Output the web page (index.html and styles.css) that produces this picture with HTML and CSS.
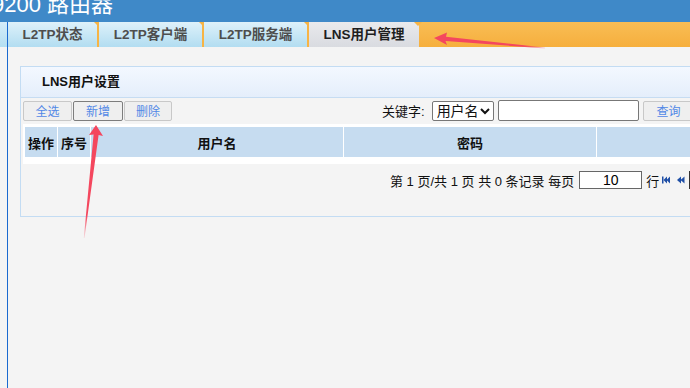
FILE: index.html
```html
<html lang="zh-CN">
<head>
    <meta charset="UTF-8">
    <title>LNS用户管理</title>
    <link rel="stylesheet" href="styles.css">
</head>
<body>
<div class="top"><span class="brand">9200 路由器</span></div>
<div class="frame">
    <div class="side"></div>
    <div class="main">
        <ul class="tabs">
            <li class="t1">L2TP状态</li>
            <li class="t2">L2TP客户端</li>
            <li class="t3">L2TP服务端</li>
            <li class="t4 on">LNS用户管理</li>
        </ul>
        <div class="content">
            <div class="panel">
                <div class="panel-head">LNS用户设置</div>
                <div class="toolbar">
                    <button class="btn b1" type="button">全选</button>
                    <button class="btn b2 focus" type="button">新增</button>
                    <button class="btn b3" type="button">删除</button>
                    <div class="search">
                        <span class="label">关键字:</span>
                        <select class="field"><option>用户名</option></select>
                        <input class="keyword" type="text">
                        <button class="btn query" type="button">查询</button>
                    </div>
                </div>
                <table class="grid">
                    <tr>
                        <th class="c1">操作</th>
                        <th class="c2">序号</th>
                        <th class="c3">用户名</th>
                        <th class="c4">密码</th>
                        <th class="c5"></th>
                    </tr>
                </table>
                <div class="pager">
                    <span>第 1 页/共 1 页 共 0 条记录 每页</span>
                    <input class="rows" type="text" value="10">
                    <span class="unit">行</span>
                    <svg class="ico" width="8" height="8" viewBox="0 0 8 8"><rect x="0" y="0.5" width="1.5" height="7" fill="#1f4fa6"/><polygon points="1.5,4 5,0.5 5,7.5" fill="#1f4fa6"/><polygon points="4.5,4 8,0.5 8,7.5" fill="#1f4fa6"/></svg>
                    <svg class="ico prev" width="8" height="8" viewBox="0 0 8 8"><polygon points="0,4 4,0.5 4,7.5" fill="#1f4fa6"/><polygon points="3.5,4 7.5,0.5 7.5,7.5" fill="#1f4fa6"/></svg>
                    <span class="more"></span>
                </div>
            </div>
        </div>
    </div>
</div>

<!-- annotation arrows drawn over the screenshot -->
<svg class="marks" width="690" height="388" viewBox="0 0 690 388">
    <defs>
        <linearGradient id="fade1" x1="435" y1="38" x2="545" y2="48" gradientUnits="userSpaceOnUse">
            <stop offset="0" stop-color="#f4475e"/>
            <stop offset="0.8" stop-color="#f4475e"/>
            <stop offset="1" stop-color="#f4475e" stop-opacity="0.2"/>
        </linearGradient>
        <linearGradient id="fade2" x1="96" y1="125" x2="84" y2="238" gradientUnits="userSpaceOnUse">
            <stop offset="0" stop-color="#f4475e"/>
            <stop offset="0.8" stop-color="#f4475e"/>
            <stop offset="1" stop-color="#f4475e" stop-opacity="0.15"/>
        </linearGradient>
    </defs>
    <polygon fill="url(#fade1)" points="434,38 447,32.5 446,36.8 545,47.5 545,48.5 445.5,41 447,45"/>
    <polygon fill="url(#fade2)" points="96,125 103,136 98.6,135 84.5,238 83.8,238 93.6,134.5 89,135"/>
</svg>
</body>
</html>
```

FILE: styles.css
```css
body {
    margin: 0;
    padding: 0;
    width: 690px;
    height: 388px;
    overflow: hidden;
    background: #f4f4f4;
    font: 13px "Liberation Sans", "Noto Sans CJK SC", sans-serif;
    color: #111;
}

.top {
    height: 22px;
    overflow: hidden;
    background: #3f89c8;
}

.brand {
    display: block;
    margin: -6px 0 0 -8px;
    font-size: 22px;
    line-height: 22px;
    color: #fff;
    white-space: nowrap;
}

.frame {
    display: flex;
    height: 366px;
}

.side {
    width: 7px;
    border-right: 1px solid #1a6ad0;
    background: linear-gradient(#d6edf9, #b4dff2 25px, #f4f4f4 25px);
}

.main {
    flex: 1;
    min-width: 0;
}

/* tab strip */
.tabs {
    display: flex;
    height: 25px;
    margin: 0;
    padding: 0;
    list-style: none;
    background: linear-gradient(#f9bd55, #f6af3d);
}

.tabs li {
    position: relative;
    height: 25px;
    line-height: 25px;
    text-align: center;
    font-weight: bold;
    font-size: 13.5px;
    color: #4e4e4e;
    background: linear-gradient(#def1fa, #b2ddf1);
    border-right: 2px solid #f7b445;
}

.tabs li::after {
    content: "";
    position: absolute;
    top: 0;
    right: -5px;
    border-left: 4px solid transparent;
    border-right: 4px solid transparent;
    border-top: 4px solid #f7b445;
}

.tabs .t1 { width: 89px; }
.tabs .t2 { width: 103px; }
.tabs .t3 { width: 103px; }
.tabs .t4 { width: 110px; border-right: 0; }
.tabs .t4::after { right: -3px; }

.tabs li.on {
    color: #1e1e1e;
    background: linear-gradient(#e9eaed, #d9dbe0);
}

/* content */
.content {
    padding: 19px 0 0 12px;
}

.panel {
    box-sizing: border-box;
    width: 700px;
    height: 151px;
    border: 1px solid #c3dcf3;
    background: #f4f4f4;
}

.panel-head {
    height: 30px;
    line-height: 30px;
    padding-left: 21px;
    font-weight: bold;
    border-bottom: 1px solid #c6dcf2;
    background: linear-gradient(#f3f8ff, #e4eefb);
}

.toolbar {
    display: flex;
    align-items: center;
    padding: 2px 2px 0 2px;
}

.btn {
    box-sizing: border-box;
    height: 20px;
    margin: 0 1px 0 0;
    padding: 0;
    border: 1px solid #c8c8c8;
    border-radius: 2px;
    background: #efefef;
    color: #5288e6;
    font: 12px "Liberation Sans", "Noto Sans CJK SC", sans-serif;
}

.b1 { width: 49px; }
.b2 { width: 50px; }
.b3 { width: 48px; }

.btn.focus {
    border-color: #7d7d7d;
}

.search {
    display: flex;
    align-items: center;
    margin-left: 209px;
}

.label {
    margin-right: 7px;
}

.field {
    box-sizing: border-box;
    width: 62px;
    height: 20px;
    margin: 0 4px 0 0;
    padding: 0;
    border: 1px solid #777;
    border-radius: 2px;
    background: #fff;
    color: #111;
    font: 14px "Liberation Sans", "Noto Sans CJK SC", sans-serif;
}

.keyword {
    box-sizing: border-box;
    width: 141px;
    height: 21px;
    margin: 0 4px 0 0;
    border: 1px solid #777;
    border-radius: 2px;
    background: #fff;
}

.query {
    width: 52px;
}

/* grid */
.grid {
    table-layout: fixed;
    width: 696px;
    margin: 3px 0 0 2px;
    padding: 2px 1px 6px 1px;
    border-spacing: 1px;
    background: #fff;
    font: 13px "Liberation Sans", "Noto Sans CJK SC", sans-serif;
}

.grid th {
    height: 30px;
    padding: 0;
    background: #c6dcf0;
    font-weight: bold;
    color: #111;
    white-space: nowrap;
}

.grid .c1 { width: 32px; }
.grid .c2 { width: 32px; }
.grid .c3 { width: 252px; }
.grid .c4 { width: 252px; }

/* pagination */
.pager {
    display: flex;
    align-items: center;
    height: 18px;
    margin-top: 7px;
    padding-left: 369px;
    white-space: nowrap;
}

.rows {
    box-sizing: border-box;
    width: 63px;
    height: 18px;
    margin: 0 0 0 5px;
    border: 1px solid #666;
    background: #fff;
    text-align: center;
    font: 14px "Liberation Sans", "Noto Sans CJK SC", sans-serif;
}

.unit {
    margin: 0 3px 0 4px;
}

.ico {
    flex: none;
}

.prev {
    margin-left: 7px;
}

.more {
    flex: none;
    width: 10px;
    height: 18px;
    margin-left: 4px;
    border-left: 1px solid #333;
}

.marks {
    position: absolute;
    left: 0;
    top: 0;
    pointer-events: none;
}
```
